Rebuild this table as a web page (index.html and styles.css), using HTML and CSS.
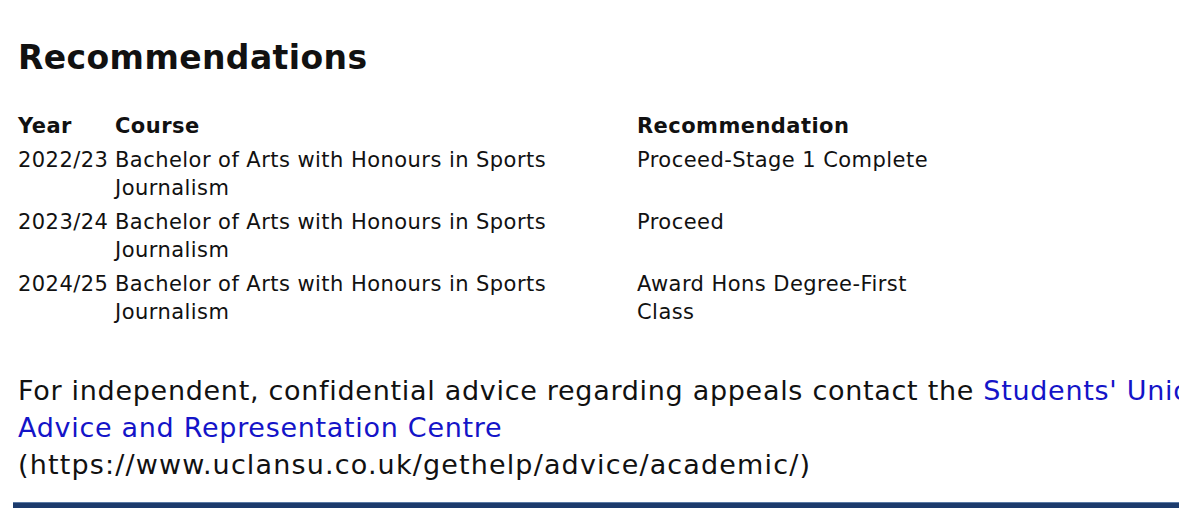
FILE: index.html
```html
<!DOCTYPE html>
<html>
<head>
<meta charset="utf-8">
<link rel="stylesheet" href="styles.css">
</head>
<body>
<div class="page">
  <h2 class="title">Recommendations</h2>
  <table class="recs">
    <thead>
      <tr><th class="c-year">Year</th><th class="c-course">Course</th><th class="c-rec">Recommendation</th></tr>
    </thead>
    <tbody>
      <tr><td>2022/23</td><td>Bachelor of Arts with Honours in Sports Journalism</td><td>Proceed-Stage 1 Complete</td></tr>
      <tr><td>2023/24</td><td>Bachelor of Arts with Honours in Sports Journalism</td><td>Proceed</td></tr>
      <tr><td>2024/25</td><td>Bachelor of Arts with Honours in Sports Journalism</td><td>Award Hons Degree-First Class</td></tr>
    </tbody>
  </table>
  <p class="advice">For independent, confidential advice regarding appeals contact the <a href="#" class="link">Students' Union Advice and Representation Centre</a> <span class="url">(https://www.uclansu.co.uk/gethelp/advice/academic/)</span></p>
  <div class="rule"></div>
</div>
</body>
</html>
```
FILE: styles.css
```css
html, body { margin: 0; padding: 0; background: #fff; }
body { font-family: "DejaVu Sans", Verdana, sans-serif; color: #111; overflow: hidden; }
.page { width: 1300px; padding: 0 0 0 18px; }
.title { font-size: 33px; letter-spacing: 0.4px; font-weight: bold; margin: 38px 0 0 0; line-height: 40px; }
.recs { border-collapse: collapse; margin-top: 34px; font-size: 21px; letter-spacing: 0.45px; line-height: 28px; }
.recs th { text-align: left; font-weight: bold; padding: 0 0 6px 0; vertical-align: top; }
.recs td { vertical-align: top; padding: 0 0 6px 0; }
.c-year { width: 97px; }
.c-course { width: 522px; }
.c-rec { width: 300px; }
.recs td:nth-child(2) { padding-right: 60px; }
.advice { font-size: 27px; letter-spacing: 0.7px; line-height: 37px; margin: 40px 0 0 0; width: 1240px; }
.link { color: #1414c8; text-decoration: none; }
.url { letter-spacing: 1.15px; }
.rule { height: 5px; background: #1c3b6c; border-top: 1px solid #5a7aa5; margin: 19px 0 0 -5px; }
```
